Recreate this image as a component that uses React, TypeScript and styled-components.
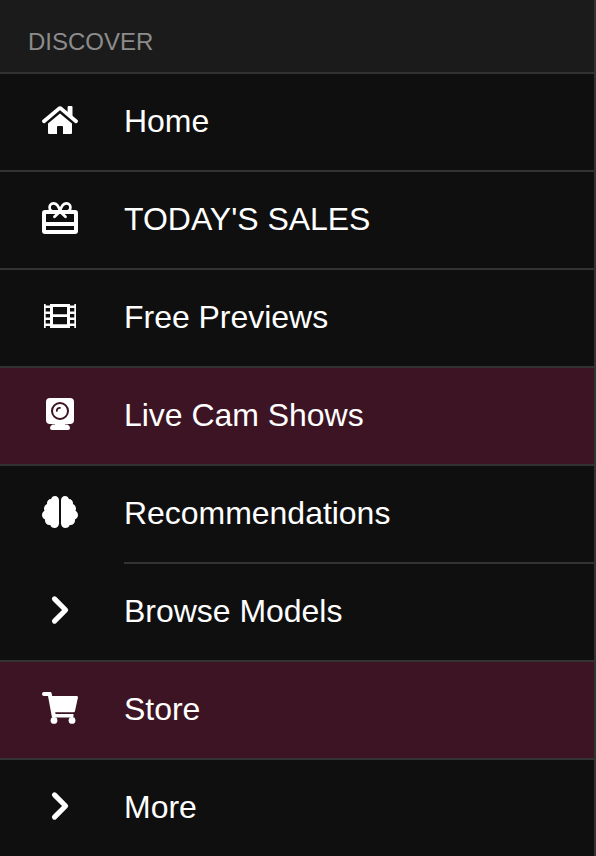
import React from 'react';
import styled, { createGlobalStyle } from 'styled-components';
import { FaBrain } from 'react-icons/fa';

const GlobalStyle = createGlobalStyle`
  * { box-sizing: border-box; }
  body { margin: 0; background: #0f0f0f; font-family: "Liberation Sans", Arial, sans-serif; }
`;

const Sidebar = styled.nav`
  width: 596px;
  height: 856px;
  overflow: hidden;
  background: #0f0f0f;
  border-right: 2px solid #333;
`;

const Heading = styled.h2`
  margin: 0;
  height: 74px;
  padding: 12px 28px 0;
  display: flex;
  align-items: center;
  background: #1b1b1b;
  border-bottom: 2px solid #333;
  color: #8c8c8c;
  font-size: 24px;
  font-weight: 400;
`;

const List = styled.ul`
  margin: 0;
  padding: 0;
  list-style: none;
`;

const Item = styled.li<{ $featured?: boolean }>`
  display: flex;
  height: 98px;
  background: ${p => (p.$featured ? '#3d1423' : 'transparent')};
`;

const IconCell = styled.span<{ $line: boolean }>`
  width: 124px;
  flex: none;
  padding: 0 4px 4px 0;
  display: flex;
  align-items: center;
  justify-content: center;
  color: #fff;
  border-bottom: 2px solid ${p => (p.$line ? '#333' : 'transparent')};
  svg { display: block; }
`;

const Label = styled.span`
  flex: 1;
  padding-bottom: 1px;
  display: flex;
  align-items: center;
  color: #fff;
  font-size: 32px;
  letter-spacing: -0.03px;
  border-bottom: 2px solid #333;
`;

const Icon = styled.svg.attrs({ width: 36, height: 36, viewBox: '0 0 36 36' })`
  fill: currentColor;
`;

const Stroke = styled.path<{ $width: number; $color?: string }>`
  fill: none;
  stroke: ${p => p.$color ?? 'currentColor'};
  stroke-width: ${p => p.$width};
  stroke-linecap: round;
  stroke-linejoin: round;
`;

const Home = () => (
  <Icon>
    <path d="M25.6 5q0-1 1-1h2.9q1 0 1 1v10l-4.9-4z" />
    <Stroke $width={3.8} d="M2 19.2 17 6.6q1-.8 2 0L34 19.2" />
    <path d="M18 11.4 30 21.4V31q0 1-1 1h-8v-7q0-1-1-1h-4q-1 0-1 1v7H7q-1 0-1-1v-9.6z" />
  </Icon>
);

const Gift = () => (
  <Icon>
    <path fillRule="evenodd" d="M3 10h30q3 0 3 3v18q0 3-3 3H3q-3 0-3-3V13q0-3 3-3zm1 4v8h28v-8zm0 12v4h28v-4z" />
    <Stroke
      $width={2.7}
      d="M18 11.5C16.8 6.2 14.4 3.4 11.5 3.4S7.6 5.8 7.6 7.4c0 2.4 1.8 4.1 4.4 4.1h12c2.6 0 4.4-1.7 4.4-4.1 0-1.6-1-4-3.9-4S19.2 6.2 18 11.5"
    />
    <Stroke $width={2.8} d="m18 11.5-5.5 5.2M18 11.5l5.5 5.2" />
  </Icon>
);

const Film = () => (
  <Icon>
    <path fillRule="evenodd" d="M8 6h20v24H8zm3 3v7.3h14V9zm0 10v7.3h14V19z" />
    <path d="M2 6h1.7v1.5H8V10H3.7v3.5H8V16H3.7v3.5H8V22H3.7v3.5H8V28H3.7v2H2zM34 6h-1.7v1.5H28V10h4.3v3.5H28V16h4.3v3.5H28V22h4.3v3.5H28V28h4.3v2H34z" />
  </Icon>
);

const Webcam = () => (
  <Icon>
    <rect x="4" y="2" width="28" height="26" rx="4" />
    <path d="M13 27h10v1.5h2.5q2.5 1.2 2.5 3.5 0 2-2 2H10q-2 0-2-2 0-2.3 2.5-3.5H13z" />
    <circle cx="18" cy="15" r="8" fill="none" stroke="#3d1423" strokeWidth="2" />
    <Stroke $width={1.7} $color="#3d1423" d="M14.8 15q0-3.2 3.2-3.2" />
  </Icon>
);

const Chevron = () => (
  <Icon>
    <Stroke $width={5.1} d="M12.5 6.9 23.6 18 12.5 29.1" />
  </Icon>
);

const Cart = () => (
  <Icon>
    <path d="M2 2h6.2q1.2 0 1.4 1.2L10.2 6H34.5q1.8 0 1.4 1.7L33 21q-.3 1.2-1.5 1.2H13.2l.4 1.8h17.2q1 0 .8 1.2l-.5 2.3H11q-1 0-1.2-1L6 6H2Q0 6 0 4t2-2z" />
    <circle cx="12" cy="30.4" r="3.4" />
    <circle cx="30" cy="30.4" r="3.4" />
  </Icon>
);

const items = [
  { label: 'Home', icon: <Home /> },
  { label: "TODAY'S SALES", icon: <Gift /> },
  { label: 'Free Previews', icon: <Film /> },
  { label: 'Live Cam Shows', icon: <Webcam />, featured: true },
  { label: 'Recommendations', icon: <FaBrain size={36} />, inset: true },
  { label: 'Browse Models', icon: <Chevron /> },
  { label: 'Store', icon: <Cart />, featured: true },
  { label: 'More', icon: <Chevron /> },
];

export default function App() {
  return (
    <>
      <GlobalStyle />
      <Sidebar>
        <Heading>DISCOVER</Heading>
        <List>
          {items.map(i => (
            <Item key={i.label} $featured={i.featured}>
              <IconCell $line={!i.inset}>{i.icon}</IconCell>
              <Label>{i.label}</Label>
            </Item>
          ))}
        </List>
      </Sidebar>
    </>
  );
}
